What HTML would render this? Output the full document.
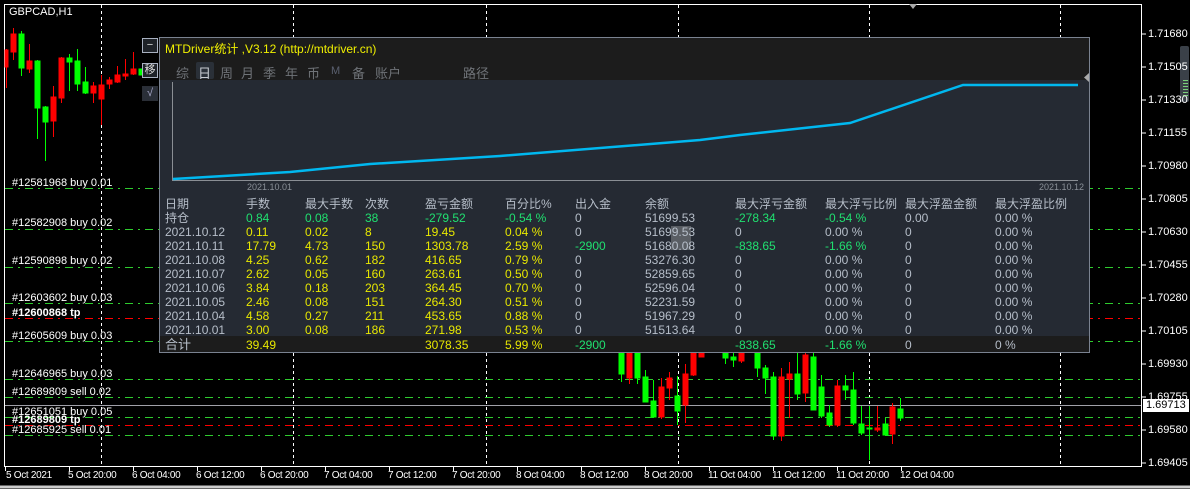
<!DOCTYPE html>
<html><head><meta charset="utf-8"><style>
*{margin:0;padding:0}
body{width:1190px;height:489px;background:#000;position:relative;overflow:hidden;font-family:"Liberation Sans","Noto Sans CJK SC",sans-serif;}
.t{position:absolute;white-space:nowrap;font-size:11px;color:#fff;}
.p{position:absolute;left:1148px;font-size:11px;color:#fff;font-family:"Liberation Sans",sans-serif}
.x{position:absolute;top:470px;font-size:10px;letter-spacing:-0.3px;color:#fff;white-space:nowrap}
#panel{position:absolute;left:159px;top:37px;width:929px;height:314px;border:1px solid #7a8290;background:#252a33;}
.c{position:absolute;font-size:12px;white-space:nowrap;line-height:14px}
.g{color:#b6bec9}.y{color:#e8e800}.gr{color:#20e070}
.tab{position:absolute;top:25px;font-size:13px;color:#6f7378}
.btn{position:absolute;left:142px;width:14px;height:13px;border:1px solid #a8b0c0;background:#1e2228;color:#ddd;font-size:11px;text-align:center;line-height:13px}
</style></head><body>
<svg width="1190" height="489" style="position:absolute;left:0;top:0">
<rect x="4.5" y="4.5" width="1137" height="462" fill="none" stroke="#fff" stroke-width="1"/>
<line x1="0" y1="487" x2="1190" y2="487" stroke="#ccc" stroke-width="3"/>
<g stroke="#fff" stroke-dasharray="3,3" stroke-width="1">
<line x1="101.5" y1="5" x2="101.5" y2="466"/><line x1="293.5" y1="5" x2="293.5" y2="466"/><line x1="486.5" y1="5" x2="486.5" y2="466"/><line x1="678.5" y1="5" x2="678.5" y2="466"/><line x1="869.5" y1="5" x2="869.5" y2="466"/><line x1="1060.5" y1="5" x2="1060.5" y2="466"/>
</g>
<g stroke-dasharray="8,5,2,5" stroke-width="1">
<line x1="5" y1="188.5" x2="1141" y2="188.5" stroke="#2ecc2e"/>
<line x1="5" y1="229.5" x2="1141" y2="229.5" stroke="#2ecc2e"/>
<line x1="5" y1="267.5" x2="1141" y2="267.5" stroke="#2ecc2e"/>
<line x1="5" y1="303.5" x2="1141" y2="303.5" stroke="#2ecc2e"/>
<line x1="5" y1="318.5" x2="1141" y2="318.5" stroke="#ff0000"/>
<line x1="5" y1="341.5" x2="1141" y2="341.5" stroke="#2ecc2e"/>
<line x1="5" y1="379.5" x2="1141" y2="379.5" stroke="#2ecc2e"/>
<line x1="5" y1="397.5" x2="1141" y2="397.5" stroke="#2ecc2e"/>
<line x1="5" y1="417.5" x2="1141" y2="417.5" stroke="#2ecc2e"/>
<line x1="5" y1="425.5" x2="1141" y2="425.5" stroke="#ff0000"/>
<line x1="5" y1="435.5" x2="1141" y2="435.5" stroke="#2ecc2e"/>
</g>
<line x1="5" y1="405.5" x2="1141" y2="405.5" stroke="#a0a0a8"/>
<g stroke-width="1">
<g fill="#f00" stroke="#f00"><line x1="6.5" y1="49" x2="6.5" y2="88"/><rect x="5" y="50" width="3" height="17"/></g>
<g fill="#f00" stroke="#f00"><line x1="13.5" y1="28" x2="13.5" y2="60"/><rect x="11" y="34" width="5" height="18"/></g>
<g fill="#0f0" stroke="#0f0"><line x1="21.5" y1="31" x2="21.5" y2="76"/><rect x="19" y="34" width="5" height="34"/></g>
<g fill="#f00" stroke="#f00"><line x1="29.5" y1="44" x2="29.5" y2="73"/><rect x="27" y="61" width="5" height="8"/></g>
<g fill="#0f0" stroke="#0f0"><line x1="37.5" y1="60" x2="37.5" y2="139"/><rect x="35" y="61" width="5" height="47"/></g>
<g fill="#0f0" stroke="#0f0"><line x1="45.5" y1="106" x2="45.5" y2="161"/><rect x="43" y="107" width="5" height="15"/></g>
<g fill="#f00" stroke="#f00"><line x1="53.5" y1="86" x2="53.5" y2="137"/><rect x="51" y="97" width="5" height="24"/></g>
<g fill="#f00" stroke="#f00"><line x1="61.5" y1="57" x2="61.5" y2="103"/><rect x="59" y="58" width="5" height="40"/></g>
<g fill="#0f0" stroke="#0f0"><line x1="69.5" y1="54" x2="69.5" y2="91"/><rect x="67" y="58" width="5" height="4"/></g>
<g fill="#0f0" stroke="#0f0"><line x1="77.5" y1="49" x2="77.5" y2="91"/><rect x="75" y="61" width="5" height="23"/></g>
<g fill="#0f0" stroke="#0f0"><line x1="85.5" y1="67" x2="85.5" y2="94"/><rect x="83" y="82" width="5" height="11"/></g>
<g fill="#f00" stroke="#f00"><line x1="93.5" y1="82" x2="93.5" y2="103"/><rect x="91" y="86" width="5" height="7"/></g>
<g fill="#f00" stroke="#f00"><line x1="101.5" y1="75" x2="101.5" y2="125"/><rect x="99" y="85" width="5" height="14"/></g>
<g fill="#f00" stroke="#f00"><line x1="109.5" y1="77" x2="109.5" y2="89"/><rect x="107" y="80" width="5" height="4"/></g>
<g fill="#f00" stroke="#f00"><line x1="117.5" y1="66" x2="117.5" y2="83"/><rect x="115" y="75" width="5" height="7"/></g>
<g fill="#f00" stroke="#f00"><line x1="125.5" y1="59" x2="125.5" y2="80"/><rect x="123" y="74" width="5" height="2"/></g>
<g fill="#f00" stroke="#f00"><line x1="133.5" y1="52" x2="133.5" y2="75"/><rect x="131" y="69" width="5" height="5"/></g>
<g fill="#0f0" stroke="#0f0"><rect x="139" y="69" width="3" height="6"/></g>
</g>
<g stroke-width="1">
<g fill="#0f0" stroke="#0f0"><line x1="621.5" y1="352" x2="621.5" y2="382"/><rect x="619" y="352" width="5" height="22"/></g>
<g fill="#f00" stroke="#f00"><line x1="629.5" y1="352" x2="629.5" y2="384"/><rect x="627" y="352" width="5" height="26"/></g>
<g fill="#0f0" stroke="#0f0"><line x1="637.5" y1="352" x2="637.5" y2="384"/><rect x="635" y="352" width="5" height="26"/></g>
<g fill="#0f0" stroke="#0f0"><line x1="645.5" y1="370" x2="645.5" y2="402"/><rect x="643" y="377" width="5" height="25"/></g>
<g fill="#0f0" stroke="#0f0"><line x1="653.5" y1="380" x2="653.5" y2="418"/><rect x="651" y="401" width="5" height="16"/></g>
<g fill="#f00" stroke="#f00"><line x1="661.5" y1="378" x2="661.5" y2="419"/><rect x="659" y="387" width="5" height="30"/></g>
<g fill="#f00" stroke="#f00"><line x1="669.5" y1="372" x2="669.5" y2="400"/><rect x="667" y="378" width="5" height="10"/></g>
<g fill="#0f0" stroke="#0f0"><line x1="677.5" y1="376" x2="677.5" y2="425"/><rect x="675" y="396" width="5" height="15"/></g>
<g fill="#f00" stroke="#f00"><line x1="685.5" y1="364" x2="685.5" y2="423"/><rect x="683" y="374" width="5" height="31"/></g>
<g fill="#f00" stroke="#f00"><line x1="693.5" y1="352" x2="693.5" y2="376"/><rect x="691" y="352" width="5" height="23"/></g>
<g fill="#f00" stroke="#f00"><rect x="699" y="352" width="5" height="5"/></g>
<g fill="#0f0" stroke="#0f0"><line x1="725.5" y1="352" x2="725.5" y2="364"/><rect x="723" y="352" width="5" height="6"/></g>
<g fill="#0f0" stroke="#0f0"><line x1="733.5" y1="352" x2="733.5" y2="367"/><rect x="731" y="357" width="5" height="3"/></g>
<g fill="#f00" stroke="#f00"><line x1="741.5" y1="352" x2="741.5" y2="363"/><rect x="739" y="353" width="5" height="8"/></g>
<g fill="#0f0" stroke="#0f0"><line x1="757.5" y1="352" x2="757.5" y2="377"/><rect x="755" y="353" width="5" height="15"/></g>
<g fill="#0f0" stroke="#0f0"><line x1="765.5" y1="365" x2="765.5" y2="394"/><rect x="763" y="368" width="5" height="10"/></g>
<g fill="#0f0" stroke="#0f0"><line x1="773.5" y1="372" x2="773.5" y2="440"/><rect x="771" y="377" width="5" height="59"/></g>
<g fill="#f00" stroke="#f00"><line x1="781.5" y1="368" x2="781.5" y2="441"/><rect x="779" y="377" width="5" height="59"/></g>
<g fill="#f00" stroke="#f00"><line x1="789.5" y1="362" x2="789.5" y2="418"/><rect x="787" y="374" width="5" height="5"/></g>
<g fill="#0f0" stroke="#0f0"><line x1="797.5" y1="352" x2="797.5" y2="400"/><rect x="795" y="374" width="5" height="20"/></g>
<g fill="#f00" stroke="#f00"><line x1="805.5" y1="352" x2="805.5" y2="402"/><rect x="803" y="355" width="5" height="38"/></g>
<g fill="#0f0" stroke="#0f0"><line x1="813.5" y1="352" x2="813.5" y2="410"/><rect x="811" y="357" width="5" height="53"/></g>
<g fill="#0f0" stroke="#0f0"><line x1="821.5" y1="375" x2="821.5" y2="418"/><rect x="819" y="387" width="5" height="29"/></g>
<g fill="#0f0" stroke="#0f0"><line x1="829.5" y1="405" x2="829.5" y2="427"/><rect x="827" y="413" width="5" height="12"/></g>
<g fill="#f00" stroke="#f00"><line x1="837.5" y1="380" x2="837.5" y2="427"/><rect x="835" y="386" width="5" height="39"/></g>
<g fill="#0f0" stroke="#0f0"><line x1="845.5" y1="375" x2="845.5" y2="400"/><rect x="843" y="386" width="5" height="4"/></g>
<g fill="#0f0" stroke="#0f0"><line x1="853.5" y1="372" x2="853.5" y2="425"/><rect x="851" y="390" width="5" height="33"/></g>
<g fill="#0f0" stroke="#0f0"><line x1="861.5" y1="406" x2="861.5" y2="435"/><rect x="859" y="424" width="5" height="9"/></g>
<g fill="#0f0" stroke="#0f0"><line x1="869.5" y1="406" x2="869.5" y2="460"/><rect x="867" y="428" width="5" height="1"/></g>
<g fill="#f00" stroke="#f00"><line x1="877.5" y1="406" x2="877.5" y2="432"/><rect x="875" y="428" width="5" height="2"/></g>
<g fill="#0f0" stroke="#0f0"><line x1="885.5" y1="418" x2="885.5" y2="435"/><rect x="883" y="424" width="5" height="11"/></g>
<g fill="#f00" stroke="#f00"><line x1="892.5" y1="403" x2="892.5" y2="444"/><rect x="890" y="407" width="5" height="27"/></g>
<g fill="#0f0" stroke="#0f0"><line x1="900.5" y1="398" x2="900.5" y2="421"/><rect x="898" y="409" width="5" height="9"/></g>
</g>
<g stroke="#fff"><line x1="1142" y1="34" x2="1146" y2="34"/><line x1="1142" y1="67" x2="1146" y2="67"/><line x1="1142" y1="100" x2="1146" y2="100"/><line x1="1142" y1="133" x2="1146" y2="133"/><line x1="1142" y1="166" x2="1146" y2="166"/><line x1="1142" y1="199" x2="1146" y2="199"/><line x1="1142" y1="232" x2="1146" y2="232"/><line x1="1142" y1="265" x2="1146" y2="265"/><line x1="1142" y1="298" x2="1146" y2="298"/><line x1="1142" y1="331" x2="1146" y2="331"/><line x1="1142" y1="364" x2="1146" y2="364"/><line x1="1142" y1="397" x2="1146" y2="397"/><line x1="1142" y1="430" x2="1146" y2="430"/><line x1="1142" y1="463" x2="1146" y2="463"/></g>
<g stroke="#fff"><line x1="5.5" y1="467" x2="5.5" y2="471"/><line x1="69.5" y1="467" x2="69.5" y2="471"/><line x1="133.5" y1="467" x2="133.5" y2="471"/><line x1="197.5" y1="467" x2="197.5" y2="471"/><line x1="261.5" y1="467" x2="261.5" y2="471"/><line x1="325.5" y1="467" x2="325.5" y2="471"/><line x1="389.5" y1="467" x2="389.5" y2="471"/><line x1="453.5" y1="467" x2="453.5" y2="471"/><line x1="517.5" y1="467" x2="517.5" y2="471"/><line x1="581.5" y1="467" x2="581.5" y2="471"/><line x1="645.5" y1="467" x2="645.5" y2="471"/><line x1="709.5" y1="467" x2="709.5" y2="471"/><line x1="773.5" y1="467" x2="773.5" y2="471"/><line x1="837.5" y1="467" x2="837.5" y2="471"/><line x1="901.5" y1="467" x2="901.5" y2="471"/></g>
<polygon points="909,4 917,4 913,9" fill="#aaa"/>
<rect x="1180" y="46" width="9" height="56" rx="2" fill="#3a4048"/>
<g fill="#7ad07a"><rect x="1183" y="80" width="5" height="1"/><rect x="1183" y="83" width="5" height="1"/><rect x="1183" y="86" width="5" height="1"/><rect x="1183" y="89" width="5" height="1"/><rect x="1183" y="92" width="5" height="1"/><rect x="1183" y="95" width="5" height="1"/></g>
</svg>
<div class="t" style="left:9px;top:6px">GBPCAD,H1</div>
<div class="t" style="left:12px;top:177px">#12581968 buy 0.01</div>
<div class="t" style="left:12px;top:217px">#12582908 buy 0.02</div>
<div class="t" style="left:12px;top:255px">#12590898 buy 0.02</div>
<div class="t" style="left:12px;top:292px">#12603602 buy 0.03</div>
<div class="t" style="left:12px;top:307px;font-weight:bold">#12600868 tp</div>
<div class="t" style="left:12px;top:330px">#12605609 buy 0.03</div>
<div class="t" style="left:12px;top:368px">#12646965 buy 0.03</div>
<div class="t" style="left:12px;top:386px">#12689809 sell 0.02</div>
<div class="t" style="left:12px;top:406px">#12651051 buy 0.05</div>
<div class="t" style="left:12px;top:414px;font-weight:bold">#12689809 tp</div>
<div class="t" style="left:12px;top:424px">#12685925 sell 0.01</div>
<div class="p" style="top:28px">1.71680</div><div class="p" style="top:61px">1.71505</div><div class="p" style="top:94px">1.71330</div><div class="p" style="top:127px">1.71155</div><div class="p" style="top:160px">1.70980</div><div class="p" style="top:193px">1.70805</div><div class="p" style="top:226px">1.70630</div><div class="p" style="top:259px">1.70455</div><div class="p" style="top:292px">1.70280</div><div class="p" style="top:325px">1.70105</div><div class="p" style="top:358px">1.69930</div><div class="p" style="top:391px">1.69755</div><div class="p" style="top:424px">1.69580</div><div class="p" style="top:457px">1.69405</div>
<div class="p" style="top:399px;left:1143px;background:#fff;color:#000;padding:0 3px;height:13px;line-height:13px">1.69713</div>
<div class="x" style="left:6px">5 Oct 2021</div><div class="x" style="left:68px">5 Oct 20:00</div><div class="x" style="left:132px">6 Oct 04:00</div><div class="x" style="left:196px">6 Oct 12:00</div><div class="x" style="left:260px">6 Oct 20:00</div><div class="x" style="left:324px">7 Oct 04:00</div><div class="x" style="left:388px">7 Oct 12:00</div><div class="x" style="left:452px">7 Oct 20:00</div><div class="x" style="left:516px">8 Oct 04:00</div><div class="x" style="left:580px">8 Oct 12:00</div><div class="x" style="left:644px">8 Oct 20:00</div><div class="x" style="left:708px">11 Oct 04:00</div><div class="x" style="left:772px">11 Oct 12:00</div><div class="x" style="left:836px">11 Oct 20:00</div><div class="x" style="left:900px">12 Oct 04:00</div>
<div class="btn" style="top:38px">−</div>
<div class="btn" style="top:63px">移</div>
<div class="btn" style="top:86px;border-color:#2a2e36;background:#2a2f38;color:#aac">√</div>
<div id="panel">
<div style="position:absolute;left:0;top:0;width:929px;height:42px;background:#1c1c1c"></div>
<div class="c" style="left:5px;top:4px;color:#f0f000;font-size:12px">MTDriver统计 ,V3.12 (http://mtdriver.cn)</div>
<div style="position:absolute;left:36px;top:24px;width:18px;height:17px;background:#2a3038;border-radius:2px"></div>
<div class="tab" style="left:16px">综</div><div class="tab" style="left:38px;color:#c8ccd2">日</div><div class="tab" style="left:60px">周</div><div class="tab" style="left:81px">月</div><div class="tab" style="left:103px">季</div><div class="tab" style="left:125px">年</div><div class="tab" style="left:147px">币</div><div class="tab" style="left:171px;font-size:11px;top:27px;color:#5a6070">M</div><div class="tab" style="left:192px">备</div><div class="tab" style="left:215px">账户</div><div class="tab" style="left:303px">路径</div>
<svg width="929" height="160" style="position:absolute;left:0;top:42px">
<line x1="12.5" y1="2" x2="12.5" y2="100" stroke="#8a8e94"/>
<line x1="12" y1="100.5" x2="918" y2="100.5" stroke="#8a8e94"/>
<polyline points="13,99 30,98 130,92 210,84 340,76 540,60 580,55 690,43 803,5 918,5" fill="none" stroke="#00b8f0" stroke-width="2.5"/>
<text x="87" y="110" font-size="9" fill="#8a9098" font-family="Liberation Sans">2021.10.01</text>
<text x="879" y="110" font-size="9" fill="#8a9098" font-family="Liberation Sans">2021.10.12</text>
</svg>
<div style="position:absolute;left:0;top:298px;width:929px;height:16px;background:#1c1c1c"></div>
<div class="c g" style="left:5px;top:159px">日期</div><div class="c g" style="left:86px;top:159px">手数</div><div class="c g" style="left:145px;top:159px">最大手数</div><div class="c g" style="left:205px;top:159px">次数</div><div class="c g" style="left:265px;top:159px">盈亏金额</div><div class="c g" style="left:345px;top:159px">百分比%</div><div class="c g" style="left:415px;top:159px">出入金</div><div class="c g" style="left:485px;top:159px">余额</div><div class="c g" style="left:575px;top:159px">最大浮亏金额</div><div class="c g" style="left:665px;top:159px">最大浮亏比例</div><div class="c g" style="left:745px;top:159px">最大浮盈金额</div><div class="c g" style="left:835px;top:159px">最大浮盈比例</div>
<div class="c g" style="left:5px;top:173px">持仓</div><div class="c gr" style="left:86px;top:173px">0.84</div><div class="c gr" style="left:145px;top:173px">0.08</div><div class="c gr" style="left:205px;top:173px">38</div><div class="c gr" style="left:265px;top:173px">-279.52</div><div class="c gr" style="left:345px;top:173px">-0.54 %</div><div class="c g" style="left:415px;top:173px">0</div><div class="c g" style="left:485px;top:173px">51699.53</div><div class="c gr" style="left:575px;top:173px">-278.34</div><div class="c gr" style="left:665px;top:173px">-0.54 %</div><div class="c g" style="left:745px;top:173px">0.00</div><div class="c g" style="left:835px;top:173px">0.00 %</div>
<div style="position:absolute;left:511px;top:188px;width:20px;height:24px;background:#5a5e64"></div>
<div class="c g" style="left:5px;top:187px">2021.10.12</div><div class="c y" style="left:86px;top:187px">0.11</div><div class="c y" style="left:145px;top:187px">0.02</div><div class="c y" style="left:205px;top:187px">8</div><div class="c y" style="left:265px;top:187px">19.45</div><div class="c y" style="left:345px;top:187px">0.04 %</div><div class="c g" style="left:415px;top:187px">0</div><div class="c g" style="left:485px;top:187px">51699.53</div><div class="c g" style="left:575px;top:187px">0</div><div class="c g" style="left:665px;top:187px">0.00 %</div><div class="c g" style="left:745px;top:187px">0</div><div class="c g" style="left:835px;top:187px">0.00 %</div>
<div class="c g" style="left:5px;top:201px">2021.10.11</div><div class="c y" style="left:86px;top:201px">17.79</div><div class="c y" style="left:145px;top:201px">4.73</div><div class="c y" style="left:205px;top:201px">150</div><div class="c y" style="left:265px;top:201px">1303.78</div><div class="c y" style="left:345px;top:201px">2.59 %</div><div class="c gr" style="left:415px;top:201px">-2900</div><div class="c g" style="left:485px;top:201px">51680.08</div><div class="c gr" style="left:575px;top:201px">-838.65</div><div class="c gr" style="left:665px;top:201px">-1.66 %</div><div class="c g" style="left:745px;top:201px">0</div><div class="c g" style="left:835px;top:201px">0.00 %</div>
<div class="c g" style="left:5px;top:215px">2021.10.08</div><div class="c y" style="left:86px;top:215px">4.25</div><div class="c y" style="left:145px;top:215px">0.62</div><div class="c y" style="left:205px;top:215px">182</div><div class="c y" style="left:265px;top:215px">416.65</div><div class="c y" style="left:345px;top:215px">0.79 %</div><div class="c g" style="left:415px;top:215px">0</div><div class="c g" style="left:485px;top:215px">53276.30</div><div class="c g" style="left:575px;top:215px">0</div><div class="c g" style="left:665px;top:215px">0.00 %</div><div class="c g" style="left:745px;top:215px">0</div><div class="c g" style="left:835px;top:215px">0.00 %</div>
<div class="c g" style="left:5px;top:229px">2021.10.07</div><div class="c y" style="left:86px;top:229px">2.62</div><div class="c y" style="left:145px;top:229px">0.05</div><div class="c y" style="left:205px;top:229px">160</div><div class="c y" style="left:265px;top:229px">263.61</div><div class="c y" style="left:345px;top:229px">0.50 %</div><div class="c g" style="left:415px;top:229px">0</div><div class="c g" style="left:485px;top:229px">52859.65</div><div class="c g" style="left:575px;top:229px">0</div><div class="c g" style="left:665px;top:229px">0.00 %</div><div class="c g" style="left:745px;top:229px">0</div><div class="c g" style="left:835px;top:229px">0.00 %</div>
<div class="c g" style="left:5px;top:243px">2021.10.06</div><div class="c y" style="left:86px;top:243px">3.84</div><div class="c y" style="left:145px;top:243px">0.18</div><div class="c y" style="left:205px;top:243px">203</div><div class="c y" style="left:265px;top:243px">364.45</div><div class="c y" style="left:345px;top:243px">0.70 %</div><div class="c g" style="left:415px;top:243px">0</div><div class="c g" style="left:485px;top:243px">52596.04</div><div class="c g" style="left:575px;top:243px">0</div><div class="c g" style="left:665px;top:243px">0.00 %</div><div class="c g" style="left:745px;top:243px">0</div><div class="c g" style="left:835px;top:243px">0.00 %</div>
<div class="c g" style="left:5px;top:257px">2021.10.05</div><div class="c y" style="left:86px;top:257px">2.46</div><div class="c y" style="left:145px;top:257px">0.08</div><div class="c y" style="left:205px;top:257px">151</div><div class="c y" style="left:265px;top:257px">264.30</div><div class="c y" style="left:345px;top:257px">0.51 %</div><div class="c g" style="left:415px;top:257px">0</div><div class="c g" style="left:485px;top:257px">52231.59</div><div class="c g" style="left:575px;top:257px">0</div><div class="c g" style="left:665px;top:257px">0.00 %</div><div class="c g" style="left:745px;top:257px">0</div><div class="c g" style="left:835px;top:257px">0.00 %</div>
<div class="c g" style="left:5px;top:271px">2021.10.04</div><div class="c y" style="left:86px;top:271px">4.58</div><div class="c y" style="left:145px;top:271px">0.27</div><div class="c y" style="left:205px;top:271px">211</div><div class="c y" style="left:265px;top:271px">453.65</div><div class="c y" style="left:345px;top:271px">0.88 %</div><div class="c g" style="left:415px;top:271px">0</div><div class="c g" style="left:485px;top:271px">51967.29</div><div class="c g" style="left:575px;top:271px">0</div><div class="c g" style="left:665px;top:271px">0.00 %</div><div class="c g" style="left:745px;top:271px">0</div><div class="c g" style="left:835px;top:271px">0.00 %</div>
<div class="c g" style="left:5px;top:285px">2021.10.01</div><div class="c y" style="left:86px;top:285px">3.00</div><div class="c y" style="left:145px;top:285px">0.08</div><div class="c y" style="left:205px;top:285px">186</div><div class="c y" style="left:265px;top:285px">271.98</div><div class="c y" style="left:345px;top:285px">0.53 %</div><div class="c g" style="left:415px;top:285px">0</div><div class="c g" style="left:485px;top:285px">51513.64</div><div class="c g" style="left:575px;top:285px">0</div><div class="c g" style="left:665px;top:285px">0.00 %</div><div class="c g" style="left:745px;top:285px">0</div><div class="c g" style="left:835px;top:285px">0.00 %</div>
<div class="c g" style="left:5px;top:300px;font-size:13px">合计</div><div class="c y" style="left:86px;top:300px">39.49</div><div class="c y" style="left:265px;top:300px">3078.35</div><div class="c y" style="left:345px;top:300px">5.99 %</div><div class="c gr" style="left:415px;top:300px">-2900</div><div class="c gr" style="left:575px;top:300px">-838.65</div><div class="c gr" style="left:665px;top:300px">-1.66 %</div><div class="c g" style="left:745px;top:300px">0</div><div class="c g" style="left:835px;top:300px">0 %</div>
</div>
<svg width="8" height="10" style="position:absolute;left:1083px;top:73px"><polygon points="6,0 6,9 1,4.5" fill="#aaa"/></svg>
</body></html>
